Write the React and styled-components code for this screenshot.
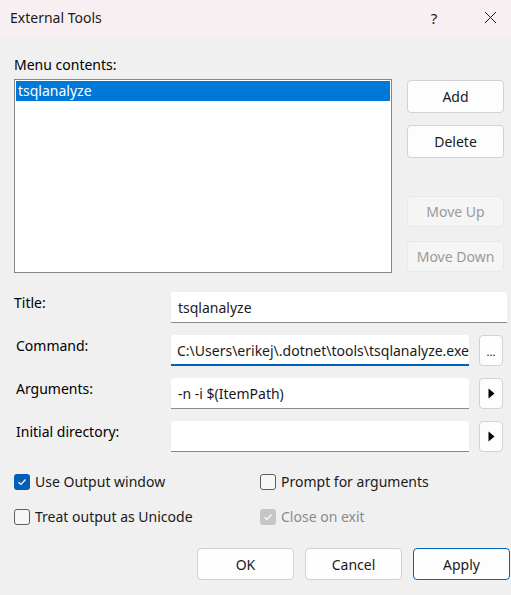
import React from "react";
import styled, { createGlobalStyle } from "styled-components";

const GlobalStyle = createGlobalStyle`
  html, body {
    margin: 0;
    padding: 0;
    background: #f0f0f0;
  }
  body {
    font-family: "Segoe UI", "Noto Sans", "Open Sans", sans-serif;
    font-size: 14px;
    color: #000;
  }
`;

const Window = styled.div`
  width: 511px;
  height: 595px;
  background: #f0f0f0;
  overflow: hidden;
  display: flex;
  flex-direction: column;
`;

const TitleBar = styled.div`
  height: 35px;
  background: #f7eff2;
  display: flex;
  align-items: center;
  padding-left: 10px;
  box-sizing: border-box;
`;

const TitleText = styled.div`
  flex: 1;
  font-size: 14px;
  color: #1a1a1a;
`;

const TitleIcon = styled.div`
  width: ${(p) => p.$w}px;
  display: flex;
  align-items: center;
  justify-content: center;
  font-size: 15px;
  color: #1a1a1a;
`;

const Body = styled.div`
  padding: 20px 1px 0 14px;
  display: flex;
  flex-direction: column;
`;

const Caption = styled.div`
  line-height: 20px;
  margin-bottom: 4px;
`;

const ListRow = styled.div`
  display: flex;
  gap: 15px;
  align-items: flex-start;
`;

const ListBox = styled.div`
  width: 378px;
  height: 194px;
  box-sizing: border-box;
  border: 1px solid #828790;
  background: #fff;
  padding: 1px;
`;

const ListItem = styled.div`
  height: 20px;
  line-height: 20px;
  padding-left: 2px;
  background: ${(p) => (p.$selected ? "#0078d7" : "transparent")};
  color: ${(p) => (p.$selected ? "#fff" : "#000")};
`;

const ButtonColumn = styled.div`
  display: flex;
  flex-direction: column;
  padding-top: 1px;
`;

const Button = styled.button`
  width: 97px;
  height: ${(p) => p.$h || 32}px;
  margin-top: ${(p) => p.$before || 0}px;
  box-sizing: border-box;
  border-radius: 4px;
  font-family: inherit;
  font-size: 14px;
  padding: 0;
  background: ${(p) => (p.$disabled ? "#f5f5f5" : "#fdfdfd")};
  color: ${(p) => (p.$disabled ? "#9a9a9a" : "#1a1a1a")};
  border: 1px solid
    ${(p) => (p.$primary ? "#0067c0" : p.$disabled ? "#e8e8e8" : "#d2d2d2")};
`;

const Form = styled.div`
  display: grid;
  grid-template-columns: 157px 298px 34px;
  grid-auto-rows: 31px;
  row-gap: 12px;
  margin-top: 19px;
`;

const FieldLabel = styled.div`
  line-height: 20px;
  padding-top: 1px;
  padding-left: ${(p) => (p.$indent ? 2 : 0)}px;
`;

const Field = styled.div`
  width: ${(p) => (p.$wide ? 336 : 298)}px;
  grid-column: ${(p) => (p.$wide ? "2 / span 2" : "auto")};
  height: 31px;
  box-sizing: border-box;
  background: #fff;
  border-radius: 3px 3px 0 0;
  border-bottom: ${(p) => (p.$focused ? "2px solid #005fb8" : "1px solid #8a8a8a")};
  display: flex;
  align-items: center;
  padding-left: 7px;
  padding-top: ${(p) => (p.$focused ? 1 : 0)}px;
  white-space: nowrap;
  overflow: hidden;
  color: #1a1a1a;
`;

const Caret = styled.span`
  display: inline-block;
  width: 1px;
  height: 18px;
  background: #000;
  margin-left: -1px;
`;

const SideButton = styled.div`
  margin-left: 10px;
  width: 24px;
  height: 31px;
  box-sizing: border-box;
  border: 1px solid #d2d2d2;
  border-radius: 4px;
  background: #fdfdfd;
  display: flex;
  align-items: ${(p) => (p.$dots ? "flex-end" : "center")};
  justify-content: center;
  font-size: 11px;
  line-height: 1;
  padding-bottom: ${(p) => (p.$dots ? 8 : 0)}px;
`;

const Options = styled.div`
  display: grid;
  grid-template-columns: 246px 1fr;
  grid-auto-rows: 20px;
  row-gap: 15px;
  margin-top: 20px;
`;

const Option = styled.label`
  display: flex;
  align-items: center;
  gap: 5px;
  line-height: 20px;
  color: ${(p) => (p.$disabled ? "#8a8a8a" : "#1a1a1a")};
`;

const Box = styled.span`
  width: 16px;
  height: 16px;
  box-sizing: border-box;
  border-radius: 3px;
  display: flex;
  align-items: center;
  justify-content: center;
  background: ${(p) =>
    p.$disabled ? "#c6c6c6" : p.$checked ? "#005fb8" : "#f7f7f7"};
  border: ${(p) =>
    p.$checked ? "none" : "1px solid #5f5f5f"};
`;

const Footer = styled.div`
  display: flex;
  justify-content: flex-end;
  gap: 11px;
  margin-top: 21px;
`;

const Check = () => (
  <svg width="10" height="8" viewBox="0 0 10 8">
    <path d="M1.5 4.2 L4 6.5 L8.5 1.5" fill="none" stroke="#fff" strokeWidth="1.2" />
  </svg>
);

const Arrow = () => (
  <svg width="7" height="11" viewBox="0 0 7 11">
    <path d="M0.5 0.5 L6.5 5.5 L0.5 10.5 Z" fill="#000" />
  </svg>
);

const CheckOption = ({ checked, disabled, children }) => (
  <Option $disabled={disabled}>
    <Box $checked={checked} $disabled={disabled}>
      {checked && <Check />}
    </Box>
    {children}
  </Option>
);

const App = () => {
  return (
    <Window>
      <GlobalStyle />
      <TitleBar>
        <TitleText>External Tools</TitleText>
        <TitleIcon $w={46}>?</TitleIcon>
        <TitleIcon $w={12} />
        <TitleIcon $w={42}>
          <svg width="13" height="13" viewBox="0 0 13 13">
            <path d="M1 1 L12 12 M12 1 L1 12" stroke="#1a1a1a" strokeWidth="1" />
          </svg>
        </TitleIcon>
      </TitleBar>
      <Body>
        <Caption>Menu contents:</Caption>
        <ListRow>
          <ListBox>
            <ListItem $selected>tsqlanalyze</ListItem>
          </ListBox>
          <ButtonColumn>
            <Button $h={33}>Add</Button>
            <Button $before={12} $h={33}>Delete</Button>
            <Button $before={38} $h={31} $disabled>Move Up</Button>
            <Button $before={14} $h={31} $disabled>Move Down</Button>
          </ButtonColumn>
        </ListRow>

        <Form>
          <FieldLabel>Title:</FieldLabel>
          <Field $wide>tsqlanalyze</Field>

          <FieldLabel $indent>Command:</FieldLabel>
          <Field $focused>
            <Caret />
            C:\Users\erikej\.dotnet\tools\tsqlanalyze.exe
          </Field>
          <SideButton $dots>...</SideButton>

          <FieldLabel $indent>Arguments:</FieldLabel>
          <Field>-n -i $(ItemPath)</Field>
          <SideButton>
            <Arrow />
          </SideButton>

          <FieldLabel $indent>Initial directory:</FieldLabel>
          <Field />
          <SideButton>
            <Arrow />
          </SideButton>
        </Form>

        <Options>
          <CheckOption checked>Use Output window</CheckOption>
          <CheckOption>Prompt for arguments</CheckOption>
          <CheckOption>Treat output as Unicode</CheckOption>
          <CheckOption checked disabled>Close on exit</CheckOption>
        </Options>

        <Footer>
          <Button>OK</Button>
          <Button>Cancel</Button>
          <Button $primary>Apply</Button>
        </Footer>
      </Body>
    </Window>
  );
};

export default App;
